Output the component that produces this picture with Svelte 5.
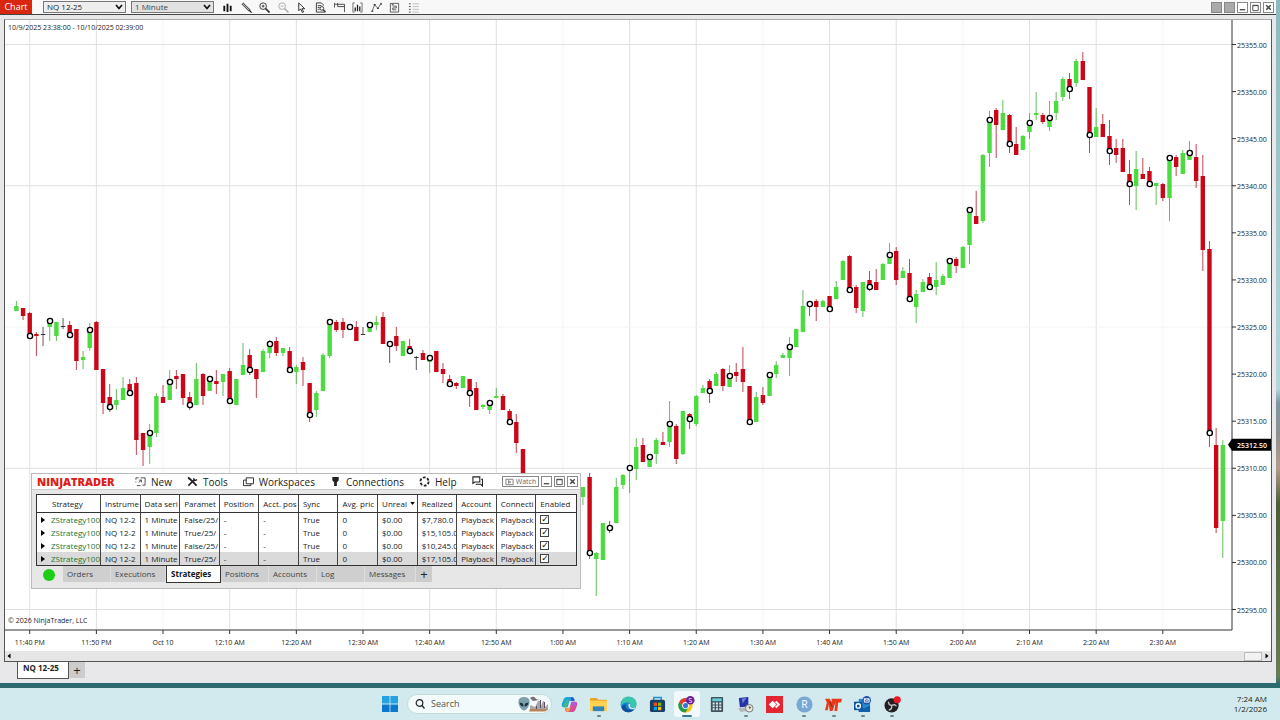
<script lang="ts">
  type Candle = { trend: string; high: number; top: number; bottom: number; low: number };

  // one bar per minute: trend, high, body top, body bottom, low (g = up, r = down, k = flat)
  const bars = `
    g 301 306 311 311,r 308 308 316 320,r 312 313 336 336,r 332 334 336 356,k 327 334 335 346,g 320 321 327 341,
    g 322 322 336 341,k 318 326 327 329,r 321 325 335 335,r 329 329 361 370,g 351 357 360 369,g 323 330 348 351,
    r 321 322 370 370,r 369 369 403 414,r 384 397 407 412,g 389 400 405 410,g 377 388 400 400,r 379 384 393 393,
    r 377 383 440 455,r 433 433 450 466,g 424 433 447 464,g 393 396 433 437,r 385 397 403 403,g 370 382 400 400,
    r 370 376 379 389,r 374 374 398 405,r 392 397 405 410,g 363 379 405 405,r 373 374 396 405,g 377 379 391 391,
    r 370 381 384 394,g 374 374 382 396,r 368 371 401 401,g 379 379 405 405,g 343 365 375 375,r 349 355 370 375,
    r 369 369 379 398,g 349 351 372 372,g 340 344 353 358,r 337 341 353 356,g 348 348 353 356,r 347 351 370 370,
    g 365 367 372 384,r 357 362 370 386,r 383 383 415 422,g 391 393 410 417,g 353 355 391 391,g 322 322 356 358,
    r 320 322 330 332,r 318 322 330 338,k 325 327 327 329,r 321 327 341 341,k 327 334 335 335,g 322 325 332 332,
    g 316 322 325 330,r 312 317 344 344,k 344 344 344 363,r 327 336 346 351,g 341 341 356 356,r 339 346 351 351,
    k 356 357 358 370,r 350 353 360 360,g 357 358 362 373,r 351 351 372 372,r 363 369 374 383,r 375 379 384 384,
    r 382 383 386 389,g 376 376 388 388,r 379 379 393 407,r 382 388 410 410,g 404 405 407 409,g 400 403 410 414,
    g 388 396 398 398,r 394 396 410 410,r 409 411 422 422,r 414 422 443 453,r 449 449 475 475,r 478 480 500 505,
    r 495 500 520 525,g 500 505 520 522,r 500 505 530 540,g 520 525 530 535,g 500 505 525 530,r 500 505 515 520,
    g 490 495 515 520,g 487 487 497 505,r 473 477 553 559,g 552 553 559 596,g 523 523 560 560,k 521 528 528 533,
    g 478 487 523 523,g 474 475 485 489,g 468 468 468 493,g 438 447 469 480,r 438 445 462 462,g 457 457 467 467,
    g 438 440 454 464,r 432 442 445 445,g 401 424 442 447,r 424 426 459 464,g 411 411 454 455,r 413 414 419 429,
    g 395 396 424 426,g 385 388 393 393,r 379 381 391 403,g 372 374 386 386,r 368 369 386 391,g 365 376 387 387,
    r 363 372 376 382,r 347 369 382 392,r 386 386 422 422,g 392 397 422 422,r 387 395 403 405,g 375 375 396 396,
    g 361 365 374 378,g 353 355 358 358,g 337 347 358 376,g 329 329 347 347,g 290 306 332 332,r 304 304 304 316,
    r 299 301 307 321,g 300 301 307 307,r 296 296 309 309,g 281 287 299 299,g 260 261 280 280,r 255 256 290 293,
    r 285 287 308 313,g 282 282 311 317,r 271 280 287 291,r 269 282 290 290,g 263 264 280 280,g 243 255 264 264,
    r 247 251 280 285,g 267 271 278 278,r 259 273 299 299,g 290 294 307 323,g 279 282 292 292,r 273 277 287 287,
    g 262 280 287 295,g 274 276 285 285,g 261 261 278 278,r 257 259 266 273,g 246 247 268 268,g 210 210 245 264,
    r 191 216 224 224,g 154 155 221 223,g 111 120 153 167,r 108 110 125 158,g 100 113 130 130,r 114 115 144 153,
    r 127 144 155 155,g 135 136 150 150,g 113 123 132 139,g 92 113 115 120,r 113 115 122 124,g 101 118 127 131,
    g 92 101 113 120,g 77 79 97 101,r 73 79 89 99,g 59 61 83 87,r 52 61 80 80,r 87 87 135 153,
    g 108 127 137 137,r 114 124 137 137,r 120 136 151 165,r 139 148 155 163,r 139 148 172 172,r 160 174 184 205,
    g 151 169 186 210,r 158 174 179 179,r 167 171 184 184,g 183 183 186 205,r 183 184 198 201,g 158 158 198 221,
    r 155 157 167 176,g 150 153 174 174,g 141 153 160 160,r 144 157 181 188,r 155 176 250 271,r 241 249 433 447,
    r 428 445 528 533,g 440 445 521 558`;

  const candles: Candle[] = bars
    .trim()
    .split(",")
    .map((bar) => {
      const [trend, ...v] = bar.trim().split(" ");
      return { trend, high: +v[0], top: +v[1], bottom: +v[2], low: +v[3] };
    });

  const times = [
    "11:40 PM", "11:50 PM", "Oct 10", "12:10 AM", "12:20 AM", "12:30 AM", "12:40 AM", "12:50 AM",
    "1:00 AM", "1:10 AM", "1:20 AM", "1:30 AM", "1:40 AM", "1:50 AM", "2:00 AM", "2:10 AM", "2:20 AM", "2:30 AM",
  ];
  const prices = Array.from({ length: 13 }, (_, i) => 25355 - i * 5);

  let width = $state(1266);
  let height = $state(631);
  let plotW = $derived(width - 39);
  let plotH = $derived(height - 21);

  const px = (i: number) => 11.4 + (i * (plotW - 20.6)) / 181;
  const py = (v: number) => ((v - 20) * plotH) / 610;
  const priceY = (p: number) => py(44.5 + (25355 - p) * 9.417);

  const columns = [
    "Strategy", "Instrume", "Data seri", "Paramet", "Position", "Acct. pos", "Sync",
    "Avg. pric", "Unreal", "Realized", "Account", "Connecti", "Enabled",
  ];
  const strategies = [
    { params: "False/25/", realized: "$7,780.0" },
    { params: "True/25/", realized: "$15,105.0" },
    { params: "False/25/", realized: "$10,245.0" },
    { params: "True/25/", realized: "$17,105.0" },
  ];
  const tabs = ["Orders", "Executions", "Strategies", "Positions", "Accounts", "Log", "Messages"];
  const tools = ["bars", "draw", "zoom-in", "zoom-out", "cursor", "data", "panel", "trader", "line", "strategy", "list"];
  const menu = ["New", "Tools", "Workspaces", "Connections", "Help"];
  const apps = ["copilot", "explorer", "edge", "store", "chrome", "calc", "remote", "anydesk", "rstudio", "ninja", "outlook", "obs"];
  const running = ["explorer", "chrome", "remote", "rstudio", "ninja", "outlook", "obs"];
</script>

{#snippet chevron()}
  <svg class="chevron" viewBox="0 0 8 6" aria-hidden="true"><path d="M1 1l3 3.5L7 1" fill="none" stroke="#111" stroke-width="1.7" /></svg>
{/snippet}

{#snippet winIcon(kind: string)}
  <svg viewBox="0 0 10 10" aria-hidden="true">
    {#if kind === "minimize"}
      <path d="M2 7.5h6" stroke="#222" stroke-width="1.2" />
    {:else if kind === "maximize"}
      <path d="M2 2.5h6v6h-6zM2 3h6" fill="none" stroke="#444" />
    {:else}
      <path d="M2.5 2.5l5 5M7.5 2.5l-5 5" stroke="#444" stroke-width="1.6" />
    {/if}
  </svg>
{/snippet}

<div class="desktop">
  <main class="window">
    <header class="toolbar">
      <h1>Chart</h1>
      <label class="picker">
        <select aria-label="Instrument"><option>NQ 12-25</option></select>
        {@render chevron()}
      </label>
      <label class="picker">
        <select class="interval" aria-label="Interval"><option>1 Minute</option></select>
        {@render chevron()}
      </label>
      <div class="tools">
        {#each tools as tool}
          <button aria-label={tool}>
            <svg viewBox="0 0 12 12" fill="none" stroke="#333">
              {#if tool === "bars"}
                <path d="M2.5 4v6M6 2v9M9.5 4v6" stroke="#111" stroke-width="2" />
              {:else if tool === "draw"}
                <path d="M1.5 1.5l8 8" stroke="#555" stroke-width="2.8" /><path d="M2 2l7 7" stroke="#ddd" stroke-width=".8" /><path d="M9 9l2.500 2.500" stroke="#111" stroke-width="1.200" />
              {:else if tool === "zoom-in"}
                <circle cx="4.5" cy="4.5" r="3.6" /><path d="M7 7l4.5 4.5" stroke-width="1.8" /><path d="M3 4.5h3M4.5 3v3" />
              {:else if tool === "zoom-out"}
                <g stroke="#aaa"><circle cx="4.5" cy="4.5" r="3.6" /><path d="M7 7l4.5 4.5" stroke-width="1.6" /><path d="M3 4.5h3" /></g>
              {:else if tool === "cursor"}
                <path d="M3 1v8.5l2-2 2 4 1.3-.7L6.500 7.300h3z" fill="#fff" stroke="#222" />
              {:else if tool === "data"}
                <path d="M9 4V3L7 1H1.5v10H11M3 4h4M3 6h2M3 8h2" /><circle cx="7.5" cy="7" r="2" /><path d="M9 8.5l2.5 2.5" stroke-width="1.5" />
              {:else if tool === "panel"}
                <path d="M.5 1v5M.5 2.500h11v8.500M4 1v4h7.500" stroke="#444" />
              {:else if tool === "trader"}
                <path d="M3 1H1v10h2M9 1h2v10H9" stroke="#666" /><path d="M3.5 6v4M6 3v7M8.5 5v5" stroke="#222" stroke-width="1.4" />
              {:else if tool === "line"}
                <path d="M1 10.5L4 3l3.5 4L11 1.5" stroke="#666" /><path d="M.5 10h2M3 3h2M6.5 7h2M10 2h2" stroke="#333" stroke-width="1.500" />
              {:else if tool === "strategy"}
                <path d="M1.5 1.5h9v9.500h-9zM4 4.5h4v2H4v2h4" stroke="#555" /><path d="M3 3h2" stroke="#222" />
              {:else}
                <path d="M1 2h2M1 5h2M1 8h2M1 11h2" stroke="#444" /><path d="M5 2h7M5 5h7M5 8h7M5 11h7" stroke="#bbb" />
              {/if}
            </svg>
          </button>
        {/each}
      </div>
      <div class="controls">
        <button class="link" aria-label="Link instrument"></button>
        <button class="link" aria-label="Link interval"></button>
        <button aria-label="Minimize">{@render winIcon("minimize")}</button>
        <button aria-label="Maximize">{@render winIcon("maximize")}</button>
        <button aria-label="Close">{@render winIcon("close")}</button>
      </div>
    </header>

    <section class="chart">
      <div class="plot" bind:clientWidth={width} bind:clientHeight={height}>
        <svg width="100%" height="100%">
          {#each times as time, i}
            <line class={i % 3 === 2 ? "grid faint" : "grid"} x1={px(2 + i * 10)} x2={px(2 + i * 10)} y1="0" y2={plotH} />
            <line class="tick" x1={px(2 + i * 10)} x2={px(2 + i * 10)} y1={plotH} y2={plotH + 4} />
            <text x={px(2 + i * 10)} y={plotH + 15} text-anchor="middle">{time}</text>
          {/each}
          {#each prices as price, i}
            {#if i % 3 === 0}
              <line class={i === 6 ? "grid faint" : "grid"} x1="0" x2={plotW} y1={priceY(price)} y2={priceY(price)} />
            {/if}
            <line class="tick" x1={plotW} x2={plotW + 4} y1={priceY(price)} y2={priceY(price)} />
            <text x={plotW + 5} y={priceY(price) + 3}>{price}.00</text>
          {/each}

          {#each candles as c, i}
            <line class="wick {c.trend}" x1={px(i)} x2={px(i)} y1={py(c.high)} y2={py(c.low)} />
            <rect class={c.trend} x={px(i) - 2.2} y={py(c.top)} width="4.4" height={Math.max(1, py(c.bottom) - py(c.top))} />
          {/each}
          {#each candles as c, i}
            {#if i % 3 === 2}
              <circle cx={px(i) + 0.3} cy={py(c.trend === "g" ? c.top : c.bottom)} r="2.6" />
            {/if}
          {/each}

          <path class="axis" d="M0 {plotH}H{plotW}V0" />
          <path d="M{plotW - 4} {priceY(25312.5)}l4 -6h39v12h-39z" />
          <text class="last" x={plotW + 5} y={priceY(25312.5) + 3}>25312.50</text>
          <text x="3" y="10">10/9/2025 23:38:00 - 10/10/2025 02:39:00</text>
          <text x="3" y={plotH - 7}>© 2026 NinjaTrader, LLC</text>
        </svg>
      </div>
      <div class="scrollbar">
        <button aria-label="Scroll left"><svg viewBox="0 0 4 6"><path d="M3.5 .5v5L.5 3z" /></svg></button>
        <span class="thumb"></span>
        <button aria-label="Scroll right"><svg viewBox="0 0 4 6"><path d="M.5 .5v5l3-2.5z" /></svg></button>
      </div>
    </section>

    <nav class="sheets">
      <button class="sheet">NQ 12-25</button>
      <button class="add" aria-label="Add tab">+</button>
    </nav>
  </main>

  <section class="center">
    <header>
      <strong>NINJATRADER</strong>
      <nav>
        {#each menu as item}
          <button>
            <svg viewBox="0 0 12 12" fill="none" stroke="#222" aria-hidden="true">
              {#if item === "New"}
                <path d="M1 4V2h3M6 2h5v8H8M1 6v1M2 10.5h4M4 7l3-2.5M4.5 4.5H7V7" stroke="#444" />
              {:else if item === "Tools"}
                <path d="M2 2l8.5 8.5" stroke-width="2" /><path d="M1.5 10.5l6-6M7 2.5L8.5 5l2.500-1M1 1.5L3.500 4" stroke-width="1.6" />
              {:else if item === "Workspaces"}
                <path d="M3.5 2h8v6.5h-8zM3.5 4.5h-3v6h8v-2" />
              {:else if item === "Connections"}
                <path d="M2.5 1h7v3.5L7.5 7v4h-3V7l-2-2.5z" fill="#222" stroke="none" />
              {:else}
                <circle cx="6" cy="6" r="4.500" stroke-width="2" stroke-dasharray="3 1.700" />
              {/if}
            </svg>
            {item}
          </button>
        {/each}
        <button aria-label="Messages">
          <svg viewBox="0 0 12 12" fill="none" stroke="#222" stroke-width="1.200"><path d="M1 1h7.500v5.500H3L1 8zM10 3.500h1.500V11L9.500 9H4" /></svg>
        </button>
      </nav>
      <div class="controls">
        <button class="watch"><svg viewBox="0 0 10 8" fill="none" stroke="#777"><path d="M1 1h8v6H1zM4 2.500v3L6.500 4z" /></svg>Watch</button>
        <button aria-label="Minimize">{@render winIcon("minimize")}</button>
        <button aria-label="Maximize">{@render winIcon("maximize")}</button>
        <button aria-label="Close">{@render winIcon("close")}</button>
      </div>
    </header>

    <table>
      <thead>
        <tr>
          {#each columns as column}
            <th>{column}{#if column === "Unreal"}<svg class="sort" viewBox="0 0 6 4" aria-hidden="true"><path d="M0 0h6L3 4z" /></svg>{/if}</th>
          {/each}
        </tr>
      </thead>
      <tbody>
        {#each strategies as row, i}
          <tr class:selected={i === 3}>
            <td class="name"><svg viewBox="0 0 4 6" aria-hidden="true"><path d="M0 0v6l4-3z" /></svg>ZStrategy100</td>
            <td>NQ 12-2</td>
            <td>1 Minute</td>
            <td>{row.params}</td>
            <td>-</td>
            <td>-</td>
            <td>True</td>
            <td>0</td>
            <td>$0.00</td>
            <td>{row.realized}</td>
            <td>Playback</td>
            <td>Playback</td>
            <td><input type="checkbox" checked aria-label="Enabled" /></td>
          </tr>
        {/each}
      </tbody>
    </table>

    <footer>
      <span class="status"></span>
      {#each tabs as tab}
        <button class="tab {tab.toLowerCase()}" class:active={tab === "Strategies"}>{tab}</button>
      {/each}
      <button class="add" aria-label="Add tab">+</button>
    </footer>
  </section>

  <footer class="taskbar">
    <div class="dock">
      <button class="start" aria-label="Start">
        <svg viewBox="0 0 16 16"><path d="M0 0h7.6v7.6H0zM8.4 0H16v7.6H8.400z" fill="#25a3e0" /><path d="M0 8.4h7.6V16H0zM8.4 8.4H16V16H8.4z" fill="#0b78cb" /></svg>
      </button>
      <label class="search">
        <svg viewBox="0 0 10 10" fill="none" stroke="#222" stroke-width="1.2" aria-hidden="true"><circle cx="4.5" cy="4" r="3.3" /><path d="M7 6.5l2.5 3" /></svg>
        <input type="text" placeholder="Search" aria-label="Search" />
        <svg class="art" viewBox="0 0 32 16" aria-hidden="true">
          <path d="M12 15V9l5 2 3-6h2l1 5 2-5h1l1 6 3-3v6l-3 1z" fill="#a9a7ac" />
          <path d="M12 13h18l-3 2.5H11z" fill="#b8845c" />
          <path d="M18 10h1v3h-1zM22 4h1v8h-1zM26 6h1v6h-1z" fill="#56505e" />
          <path d="M12 2q4-3 6 1l3 1-6 1z" fill="#786f70" />
          <path d="M6 1c4 0 6 2 5.5 6C11 11 8 14.5 6 14.5S1 11 .5 7C0 3 2 1 6 1z" fill="#7fa0ab" />
          <path d="M1.5 6.5l3.5 1 .5 3C3 10.5 2 9 1.5 6.5zM10.5 6.5L7 7.5l-.5 3c2.5 0 3.5-1.5 4-4z" fill="#15323d" />
        </svg>
      </label>
      <div class="apps">
        {#each apps as app}
          <button class={app} class:running={running.includes(app)} aria-label={app}>
            <svg viewBox="0 0 18 18" aria-hidden="true">
              {#if app === "copilot"}
                <path d="M6 1h5q2 0 2.5 2l.5 2H9L7 12H3Q0 12 1 8l2-5Q4 1 6 1z" fill="#20a4dc" />
                <path d="M3 9l3-5h2L6 12H3z" fill="#43b982" />
                <path d="M12 17H7q-2 0-2.500-2L4 13h5l2-7h4q3 0 2 4l-2 5q-1 2-3 2z" fill="#d84d9b" />
                <path d="M5 13h5l1.500-4q-2 8-4.500 8t-2-4z" fill="#f4a340" />
                <path d="M11 1q3 0 3.500 4H10z" fill="#2456ce" /><path d="M12 6h3q2 1 1 4h-4z" fill="#a75ee0" />
              {:else if app === "explorer"}
                <path d="M0 2h7l2 2h9v12H0z" fill="#e7a724" /><path d="M0 5h18v11H0z" fill="#ffd254" /><path d="M3 11h12v5H3z" fill="#3183b9" />
              {:else if app === "edge"}
                <circle cx="9" cy="9" r="8.300" fill="#1686d0" />
                <path d="M1 8Q3 0 10 .7c5 .5 8 4 7.500 8.300-.5 3-4 3.500-7 2.500 2-3-1-5.500-4-4.500Q2 8 1 11z" fill="#3ac6ac" />
                <path d="M6 9c-1 4 3 7 9 5-4 5-11 4-13-1 0-3 2-4 4-4z" fill="#0d4e9d" />
                <path d="M9 8q3 1 1.500 3.500 3 2 6.500 0l-2 2.500Q8 15 9 8z" fill="#d5edf1" />
              {:else if app === "store"}
                <path d="M5 5V1.500h8V5" fill="none" stroke="#238ed0" stroke-width="1.500" /><rect x="1" y="4" width="16" height="13" rx="2" fill="#173f68" />
                <path d="M5 7h3.500v3.500H5z" fill="#f05025" /><path d="M9.500 7H13v3.500H9.500z" fill="#7fba00" /><path d="M5 11.500h3.500V15H5z" fill="#00a4ef" /><path d="M9.500 11.500H13V15H9.500z" fill="#ffb900" />
              {:else if app === "chrome"}
                <circle cx="8" cy="10" r="7.500" fill="#fbc116" /><path d="M1.500 6A7.500 7.500 0 0 1 15 7H8L5 12z" fill="#df3c30" /><path d="M1.500 6A7.500 7.500 0 0 0 8 17.500l3-5.500H5z" fill="#229b4f" />
                <circle cx="8" cy="10" r="3.600" fill="#fff" /><circle cx="8" cy="10" r="2.700" fill="#3474de" />
                <circle cx="13" cy="4.500" r="4.500" fill="#6b2294" /><text x="13" y="7" text-anchor="middle" fill="#fff">S</text>
              {:else if app === "calc"}
                <rect x="3" y="1" width="13" height="16" rx="1" fill="#40545f" /><path d="M4.500 2.500h10v3h-10z" fill="#64ced6" />
                <path d="M6 7v9M9.500 7v9M13 7v9" stroke="#dce5e8" stroke-width="2.200" stroke-dasharray="2 1" />
              {:else if app === "remote"}
                <path d="M2 2l10-1v10L3 12z" fill="#2532a8" /><path d="M5 3l5-1-4 6z" fill="#6d83df" /><path d="M1 13l9-1 4 3-10 2z" fill="#b3b7b9" /><circle cx="13" cy="13" r="4" fill="#e9e8df" stroke="#777" /><path d="M13 11v2l2-1" fill="none" stroke="#444" />
              {:else if app === "anydesk"}
                <path d="M0 0h18v18H0z" fill="#e42632" /><path d="M7 5l4 4-4 4-4-4z" fill="#fff" /><path d="M11 5l4 4-4 4-1.500-1.500L12 9 9.500 6.500z" fill="#fff" />
              {:else if app === "rstudio"}
                <circle cx="9" cy="9" r="8.500" fill="#79a8d5" /><text class="letter" x="9" y="13" text-anchor="middle" fill="#fff">R</text>
              {:else if app === "ninja"}
                <path d="M0 3h5l2 4V3h11l-1 4h-3l-1 9h-3l1-9-3 9H5L4 9l-1 6H0l2-8z" fill="#e83a18" /><path d="M5 6l3 6" stroke="#7d2014" />
              {:else if app === "outlook"}
                <path d="M5 3h12v13H5z" fill="#2b87d1" /><path d="M5 10l6 3 6-3v7H5z" fill="#1260a9" /><rect y="6" width="9" height="9" fill="#0d58a5" /><circle cx="4.500" cy="10.500" r="2.300" fill="none" stroke="#fff" stroke-width="1.400" />
                <circle cx="13.500" cy="4.500" r="4.500" fill="#2252a8" /><path d="M11 3h5v3.500h-5zl2.500 2 2.500-2" fill="none" stroke="#fff" />
              {:else}
                <circle cx="8" cy="10" r="7.500" fill="#211f23" /><path d="M8 10q-4-1-3-4M8 10q4-2 5 1M8 10q1 4-3 5" fill="none" stroke="#bbb" stroke-width="1.500" /><circle cx="14" cy="4" r="3.800" fill="#e91922" />
              {/if}
            </svg>
          </button>
        {/each}
      </div>
    </div>
    <div class="clock"><time>7:24 AM</time><time>1/2/2026</time></div>
  </footer>
</div>

<style>
  :global(body) {
    margin: 0;
  }

  .desktop {
    position: relative;
    display: flex;
    flex-direction: column;
    height: 100vh;
    overflow: hidden;
    font-family: "Open Sans", "Noto Sans", sans-serif;
    font-size: 8px;
    line-height: 12px;
    color: #222;
    background: linear-gradient(#8dbabc, #b5d6da 54%, #7d97a3 56%, #8b908e 60%, #b29c8b 65%, #4d5d38 70%, #657c57 94%, #2b6a70 95%);
  }

  button,
  input,
  select {
    box-sizing: border-box;
    margin: 0;
    padding: 0;
    border: 0;
    border-radius: 0;
    background: none;
    font: inherit;
    color: inherit;
  }

  svg {
    display: block;
  }

  .window {
    flex: 1;
    display: flex;
    flex-direction: column;
    min-height: 0;
    margin-right: 4px;
    background: #e8e8ea;
    border-bottom: 5px solid #2b6a70;
  }

  .toolbar {
    display: flex;
    align-items: center;
    height: 14px;
    background: #f8f8f8;
    border-bottom: 1px solid #444;
  }

  h1 {
    width: 32px;
    height: 14px;
    margin: 0 11px 0 0;
    font-size: 9px;
    line-height: 13px;
    font-weight: 400;
    text-align: center;
    color: #fff;
    background: #d8260f;
  }

  .picker {
    position: relative;
    margin-right: 5px;
  }

  .picker select {
    display: block;
    width: 83px;
    height: 12px;
    padding-left: 3px;
    appearance: none;
    border: 1px solid #777;
    background: #eee;
    line-height: 10px;
  }

  .picker .interval {
    background: #e2e2e2;
    color: #444;
  }

  .chevron {
    position: absolute;
    right: 3px;
    top: 3px;
    width: 8px;
    height: 6px;
  }

  .tools {
    display: flex;
    justify-content: space-between;
    width: 197px;
    margin-left: 3px;
  }

  .tools svg {
    width: 11px;
    height: 11px;
  }

  .controls {
    display: flex;
    gap: 2px;
    margin-left: auto;
    margin-right: 2px;
  }

  .controls button {
    width: 11px;
    height: 11px;
    border: 1px solid #888;
    background: #fff;
  }

  .controls .link {
    background: #aaa;
  }

  .chart {
    flex: 1;
    display: flex;
    flex-direction: column;
    min-height: 0;
    margin: 4px 4px 0;
    border: 1px solid #555;
    border-top-color: #aaa;
    background: #fff;
  }

  .plot {
    flex: 1;
    min-height: 0;
    overflow: hidden;
  }

  .plot text {
    font-size: 7px;
    fill: #222;
  }

  .plot .last {
    fill: #fff;
    font-weight: 600;
  }

  .grid {
    stroke: #e0e0e0;
  }

  .faint {
    stroke: #f4f4f4;
  }

  .tick,
  .axis {
    fill: none;
    stroke: #333;
  }

  .g {
    fill: #4cdb40;
    stroke: #3fae38;
  }

  .r {
    fill: #cb0618;
    stroke: #b01a28;
  }

  .k {
    fill: #333;
    stroke: #333;
  }

  .plot rect {
    stroke: none;
  }

  .wick {
    opacity: 0.8;
  }

  .plot circle {
    fill: #fff;
    stroke: #000;
    stroke-width: 1.4px;
  }

  .scrollbar {
    display: flex;
    align-items: center;
    height: 10px;
    background: #e6e6e6;
  }

  .scrollbar button {
    padding: 0 2px;
  }

  .scrollbar svg {
    width: 4px;
    height: 6px;
  }

  .thumb {
    box-sizing: border-box;
    width: 18px;
    height: 9px;
    margin: 0 1px 0 auto;
    border: 1px solid #bbb;
    background: #f2f2f2;
  }

  .sheets {
    display: flex;
    height: 21px;
    padding-left: 17px;
  }

  .sheet {
    width: 52px;
    height: 17px;
    padding: 0 4px 4px 0;
    font-weight: 700;
    background: #fff;
    border: 1px solid #555;
    border-top: 0;
  }

  .add {
    width: 16px;
    height: 16px;
    font-size: 13px;
    line-height: 14px;
    background: #ccc;
  }

  .center {
    position: absolute;
    left: 31px;
    top: 473px;
    box-sizing: border-box;
    width: 550px;
    height: 116px;
    background: #e7e7e7;
    border: 1px solid #bbb;
  }

  .center header {
    display: flex;
    align-items: center;
    height: 15px;
    padding-left: 5px;
    background: #fff;
    border-bottom: 1px solid #ccc;
  }

  .center strong {
    flex: none;
    width: 98px;
    font-size: 11px;
    font-weight: 800;
    color: #dc2014;
  }

  .center nav {
    display: flex;
    gap: 15px;
    font-size: 10px;
  }

  .center nav button {
    display: flex;
    align-items: center;
    gap: 5px;
  }

  .center nav svg {
    width: 11px;
    height: 11px;
  }

  .center .controls .watch {
    display: flex;
    align-items: center;
    justify-content: center;
    gap: 2px;
    width: 37px;
    font-size: 7px;
    color: #666;
  }

  .watch svg {
    width: 9px;
    height: 8px;
  }

  table {
    table-layout: fixed;
    box-sizing: border-box;
    width: 541px;
    margin: 4px 0 0 4px;
    border: 1px solid #333;
    border-spacing: 0;
    background: #fff;
  }

  th,
  td {
    height: 13px;
    padding: 0 0 0 4px;
    border-right: 1px solid #444;
    font-weight: 400;
    line-height: 13px;
    text-align: left;
    white-space: nowrap;
    overflow: hidden;
  }

  th {
    height: 17px;
    border-bottom: 1px solid #333;
  }

  th:first-child {
    width: 48px;
    padding-left: 15px;
  }

  th:last-child,
  td:last-child {
    border-right: 0;
  }

  .sort {
    display: inline-block;
    width: 5px;
    height: 3px;
    margin: 0 0 2px 3px;
  }

  .name {
    color: #26752a;
  }

  .name svg {
    display: inline-block;
    width: 4px;
    height: 6px;
    margin-right: 6px;
  }

  .selected {
    background: #dadada;
  }

  td input {
    display: block;
    width: 9px;
    height: 9px;
    appearance: none;
    border: 1px solid #444;
    background: #fff;
  }

  td input::before {
    content: "✓";
    display: block;
    font: 700 9px/7px "DejaVu Sans", sans-serif;
    color: #111;
  }

  .center footer {
    display: flex;
    align-items: flex-start;
  }

  .status {
    width: 12px;
    height: 12px;
    margin: 3px 8px 0 11px;
    border-radius: 50%;
    background: #1fcc16;
  }

  .tab {
    width: 48px;
    height: 16px;
    padding: 0 0 1px 4px;
    border-right: 1px solid #ddd;
    background: #cfcfcf;
    color: #444;
    text-align: left;
  }

  .executions,
  .active {
    width: 55px;
  }

  .messages {
    width: 51px;
  }

  .active {
    height: 17px;
    border: 1px solid #333;
    border-top: 0;
    background: #fff;
    color: #111;
    font-weight: 700;
  }

  .taskbar {
    display: grid;
    grid-template-columns: 1fr auto 1fr;
    align-items: center;
    height: 32px;
    background: #d2eaed;
  }

  .dock {
    grid-column: 2;
    display: flex;
    align-items: center;
    padding-left: 9px;
  }

  .start {
    width: 16px;
    height: 16px;
    margin-right: 9px;
  }

  .search {
    display: flex;
    align-items: center;
    box-sizing: border-box;
    width: 145px;
    height: 20px;
    margin-right: 3px;
    padding: 0 1px 0 7px;
    border: 1px solid #c3dadd;
    border-radius: 10px;
    background: #f3fafb;
  }

  .search svg {
    width: 10px;
    height: 10px;
  }

  .search input {
    flex: 1;
    min-width: 0;
    margin-left: 6px;
    font-size: 9px;
    outline: 0;
  }

  .search input::placeholder {
    color: #555;
  }

  .search .art {
    width: 32px;
    height: 16px;
  }

  .apps {
    display: grid;
    grid-template-columns: repeat(12, 1fr);
    justify-items: center;
    width: 352px;
  }

  .apps button {
    position: relative;
    display: flex;
    align-items: center;
    justify-content: center;
    width: 26px;
    height: 26px;
    border-radius: 3px;
  }

  .apps svg {
    width: 17px;
    height: 17px;
  }

  .apps text {
    font-size: 7px;
  }

  .apps .letter {
    font-size: 11px;
  }

  .apps .chrome {
    background: #f1f9fa;
  }

  .running::after {
    content: "";
    position: absolute;
    bottom: 0;
    width: 4px;
    height: 2px;
    border-radius: 1px;
    background: #71858a;
  }

  .chrome::after {
    width: 10px;
    background: #3b7894;
  }

  .clock {
    display: flex;
    flex-direction: column;
    align-items: flex-end;
    padding-right: 13px;
    line-height: 10px;
  }
</style>
